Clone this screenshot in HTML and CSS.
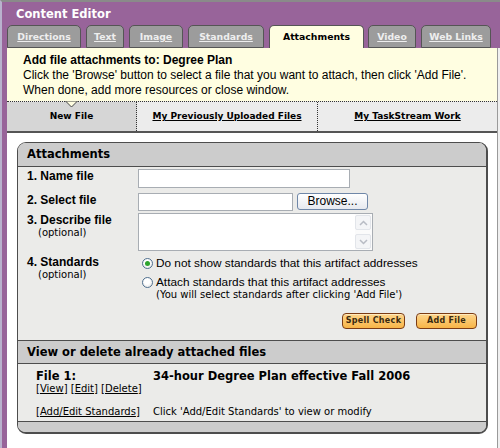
FILE: index.html
```html
<!DOCTYPE html>
<html>
<head>
<meta charset="utf-8">
<title>Content Editor</title>
<link rel="stylesheet" href="styles.css">
</head>
<body>
<div class="window">
  <div class="titlebar">Content Editor</div>
  <div class="tabs">
    <a class="tab t-directions">Directions</a>
    <a class="tab t-text">Text</a>
    <a class="tab t-image">Image</a>
    <a class="tab t-standards">Standards</a>
    <a class="tab active t-attach">Attachments</a>
    <a class="tab t-video">Video</a>
    <a class="tab t-links">Web Links</a>
  </div>
  <div class="main">
    <div class="intro">
      <div class="intro-title">Add file attachments to: Degree Plan</div>
      <div>Click the 'Browse' button to select a file that you want to attach, then click 'Add File'.</div>
      <div>When done, add more resources or close window.</div>
    </div>
    <div class="subtabs">
      <div class="subtab current">
        <svg class="notch" width="13" height="7" viewBox="0 0 13 7"><polygon points="0.5,0 6.5,6 12.5,0" fill="#fffee1" stroke="#444" stroke-width="1"/></svg>
        <span>New File</span>
      </div>
      <div class="subtab second"><a>My Previously Uploaded Files</a></div>
      <div class="subtab third"><a>My TaskStream Work</a></div>
    </div>
    <div class="content">
      <div class="panel">
        <div class="panel-head">Attachments</div>
        <div class="form">
          <div class="row r1">
            <div class="label">1. Name file</div>
            <input class="field f-name" type="text">
          </div>
          <div class="row r2">
            <div class="label">2. Select file</div>
            <input class="field f-file" type="text">
            <div class="browse">Browse...</div>
          </div>
          <div class="row r3">
            <div class="label">3. Describe file<div class="optional">(optional)</div></div>
            <div class="textarea">
              <div class="vscroll">
                <span class="sb-btn"><svg width="9" height="6" viewBox="0 0 9 6"><polyline points="1,5 4.5,1.5 8,5" fill="none" stroke="#b8bcc4" stroke-width="1.5"/></svg></span>
                <span class="sb-btn"><svg width="9" height="6" viewBox="0 0 9 6"><polyline points="1,1 4.5,4.5 8,1" fill="none" stroke="#b8bcc4" stroke-width="1.5"/></svg></span>
              </div>
            </div>
          </div>
          <div class="row r4">
            <div class="label lbl-std">4. Standards<div class="optional">(optional)</div></div>
            <div class="choices">
              <div class="choice"><span class="radio"><span class="dot"></span></span><span>Do not show standards that this artifact addresses</span></div>
              <div class="choice c2"><span class="radio"></span><span>Attach standards that this artifact addresses</span></div>
              <div class="note">(You will select standards after clicking 'Add File')</div>
            </div>
          </div>
          <div class="actions">
            <div class="obtn spell">Spell Check</div>
            <div class="obtn add">Add File</div>
          </div>
        </div>
        <div class="section-head">View or delete already attached files</div>
        <div class="files">
          <div class="file-row">
            <div class="file-name">File 1:</div>
            <div class="file-title">34-hour Degree Plan effective Fall 2006</div>
          </div>
          <div class="file-links"><a>View</a>] [<a>Edit</a>] [<a>Delete</a></div>
          <div class="file-row std-row">
            <div class="small">[<a>Add/Edit Standards</a>]</div>
            <div class="small">Click 'Add/Edit Standards' to view or modify</div>
          </div>
        </div>
        <div class="panel-foot"></div>
      </div>
    </div>
  </div>
</div>
</body>
</html>
```
FILE: styles.css
```css
* { box-sizing: border-box; }
html, body { margin: 0; padding: 0; }
body {
  width: 500px;
  height: 448px;
  overflow: hidden;
  background: #fff;
  font-family: "Liberation Sans", Arial, sans-serif;
  color: #000;
}
a { color: inherit; text-decoration: underline; }

.window {
  height: 448px;
  display: flex;
  flex-direction: column;
  background: #98649a;
  border-top: 2px solid #8a8a8a;
  border-left: 2px solid #b9b2cd;
}
.titlebar {
  height: 23px;
  padding: 5px 0 0 14px;
  font: bold 11.5px/14px "DejaVu Sans", Verdana, sans-serif;
  color: #fff;
}
.tabs {
  display: flex;
  height: 23px;
  padding-left: 5px;
  gap: 5px;
}
.tab {
  height: 23px;
  border: 1px solid #555;
  border-radius: 5px 5px 0 0;
  background: #9c9c9c;
  color: #eeeeee;
  font: bold 9.3px/12px "DejaVu Sans", Verdana, sans-serif;
  text-align: center;
  padding-top: 5px;
  text-decoration: underline;
}
.tab.active {
  background: #fffee1;
  color: #000;
  text-decoration: none;
  border-bottom: none;
}
.t-directions { width: 74px; }
.t-text { width: 38px; }
.t-image { width: 54px; }
.t-standards { width: 76px; }
.t-attach { width: 95px; }
.t-video { width: 48px; margin-left: -1px; }
.t-links { width: 70px; }

.main {
  flex: 1;
  margin-left: 5px;
  margin-right: 2px;
  background: #fff;
  border-right: 1px solid #9a9a9a;
  box-shadow: 2px 0 0 #f0f0f0;
  display: flex;
  flex-direction: column;
}
.intro {
  background: #fffee1;
  padding: 5px 0 3px 16px;
  font-size: 12px;
  line-height: 15px;
}
.intro-title { font-weight: bold; }

.subtabs {
  display: flex;
  height: 32px;
  border-top: 1px dotted #333;
  border-bottom: 2px solid #555;
  background: #ececec;
  font: bold 9px/29px "DejaVu Sans", Verdana, sans-serif;
}
.subtab {
  text-align: center;
  position: relative;
}
.subtab.current {
  width: 130px;
  background: #d6d6d6;
  border-right: 1px dotted #333;
}
.subtab.second {
  width: 181px;
  border-right: 1px dotted #333;
}
.subtab.third { flex: 1; }
.notch {
  position: absolute;
  left: 58px;
  top: -1px;
  display: block;
}

.content {
  flex: 1;
  padding: 9px 9px 0 10px;
}
.panel {
  border: 1px solid #4d4d4d;
  border-right-width: 2px;
  border-bottom-width: 2px;
  border-radius: 9px;
  overflow: hidden;
  background: #ebebe9;
}
.panel-head {
  height: 24px;
  background: #cccccc;
  border-bottom: 1px solid #4d4d4d;
  padding-left: 9px;
  font: bold 11.5px/23px "DejaVu Sans", Verdana, sans-serif;
}

.form { padding: 2px 9px 11px 9px; }
.row { display: flex; align-items: flex-start; }
.label {
  width: 111px;
  flex: none;
  font-weight: bold;
  font-size: 12px;
  line-height: 14px;
}
.optional {
  font: normal 10px/12px "DejaVu Sans", Verdana, sans-serif;
  padding-left: 11px;
}
.field {
  display: block;
  margin: 0;
  padding: 0;
  border: 1px solid #a8adb3;
  background: #fff;
  outline: none;
}
.f-name { width: 212px; height: 19px; }
.r2 { margin-top: 5px; }
.f-file { width: 155px; height: 18px; }
.browse {
  width: 71px;
  height: 17px;
  margin-left: 4px;
  border: 1px solid #6f87a8;
  border-radius: 3px;
  background: linear-gradient(#ffffff, #e6e9ef);
  font-size: 12px;
  line-height: 15px;
  text-align: center;
}
.r3 { margin-top: 2px; }
.textarea {
  width: 235px;
  height: 38px;
  border: 1px solid #a8adb3;
  background: #fff;
  display: flex;
  justify-content: flex-end;
}
.vscroll {
  width: 17px;
  display: flex;
  flex-direction: column;
  justify-content: space-between;
  padding: 1px 1px 1px 0;
  background: #fbfbfb;
}
.sb-btn {
  height: 15px;
  border: 1px solid #e2e5ea;
  border-radius: 2px;
  background: #f4f5f7;
  display: flex;
  align-items: center;
  justify-content: center;
}
.r4 { margin-top: 5px; }
.lbl-std { line-height: 13px; }
.choices {
  padding-left: 4px;
  font-size: 11.8px;
  line-height: 14px;
}
.choice { display: flex; align-items: flex-start; }
.c2 { margin-top: 5px; }
.radio {
  width: 11px;
  height: 11px;
  margin: 2px 3px 0 0;
  border-radius: 50%;
  border: 1px solid #50708f;
  background: radial-gradient(circle at 45% 40%, #ffffff 35%, #dcdcdc);
  display: flex;
  align-items: center;
  justify-content: center;
  flex: none;
}
.dot {
  width: 5px;
  height: 5px;
  border-radius: 50%;
  background: #2ea42e;
}
.note {
  padding-left: 14px;
  font: 10px/12px "DejaVu Sans", Verdana, sans-serif;
}
.actions {
  display: flex;
  justify-content: flex-end;
  gap: 11px;
  margin-top: 12px;
}
.obtn {
  height: 16px;
  border: 1px solid #7c3c14;
  border-radius: 4px;
  background: linear-gradient(#fdd58c, #f8b547);
  box-shadow: inset 0 1px 0 #ffe9bd;
  font: bold 8px/14px "DejaVu Sans", Verdana, sans-serif;
  letter-spacing: 0.3px;
  color: #3a2a10;
  text-align: center;
}
.spell { width: 63px; }
.add { width: 61px; }

.section-head {
  height: 24px;
  background: #cccccc;
  border-top: 1px solid #4d4d4d;
  border-bottom: 1px solid #4d4d4d;
  padding-left: 9px;
  font: bold 11.5px/22px "DejaVu Sans", Verdana, sans-serif;
}
.files { padding: 6px 0 3px 18px; }
.file-row { display: grid; grid-template-columns: 117px 1fr; }
.file-name, .file-title {
  font: bold 11.5px/13px "DejaVu Sans", Verdana, sans-serif;
}
.file-links, .small {
  font: 10px/12px "DejaVu Sans", Verdana, sans-serif;
}
.file-links::before { content: "["; }
.file-links::after { content: "]"; }
.std-row { margin-top: 11px; }
.panel-foot {
  height: 11px;
  background: #cccccc;
  border-top: 1px solid #4d4d4d;
}
```
